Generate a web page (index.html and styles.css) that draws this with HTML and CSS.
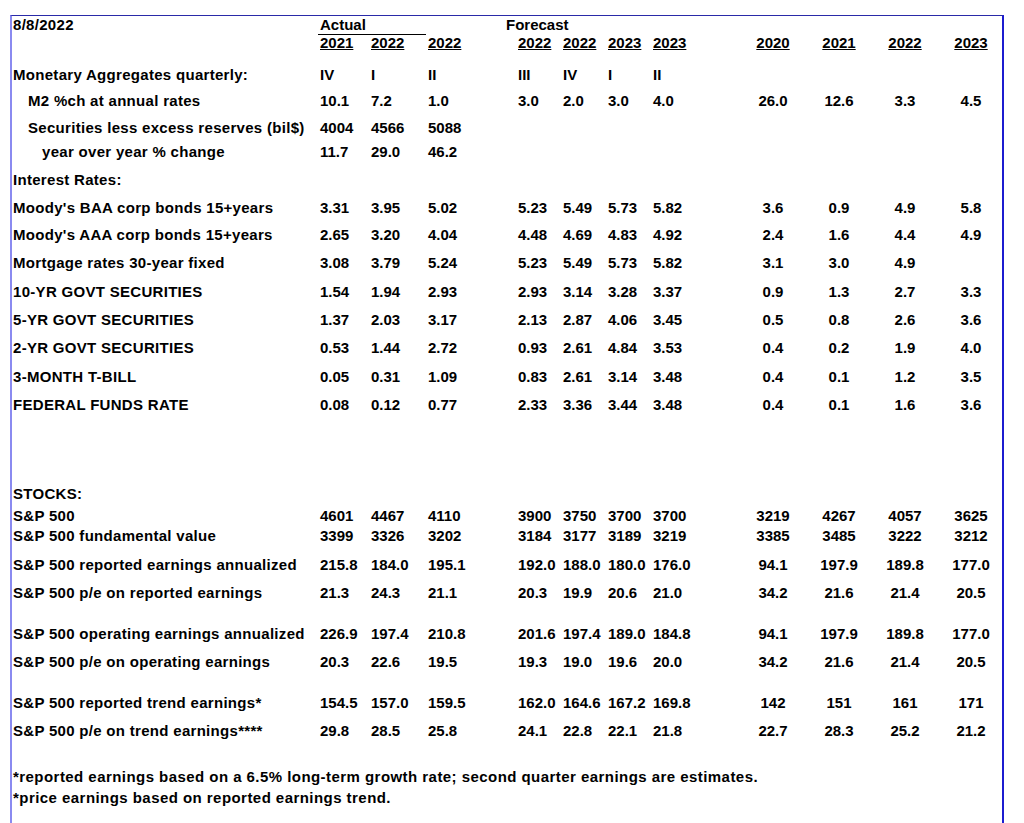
FILE: index.html
```html
<!DOCTYPE html>
<html>
<head>
<meta charset="utf-8">
<title>8/8/2022 forecast</title>
<link rel="stylesheet" href="styles.css">
</head>
<body>
<div class="sheet">
  <div class="row">
    <div>8/8/2022</div>
    <div class="actual">Actual</div>
    <div class="forecast">Forecast</div>
  </div>
  <div class="row">
    <div></div>
    <div class="u">2021</div><div class="u">2022</div><div class="u">2022</div>
    <div class="u">2022</div><div class="u">2022</div><div class="u">2023</div><div class="u">2023</div>
    <div class="c u">2020</div><div class="c u">2021</div><div class="c u">2022</div><div class="c u">2023</div>
  </div>
  <div class="row m14">
    <div>Monetary Aggregates quarterly:</div>
    <div>IV</div><div>I</div><div>II</div>
    <div>III</div><div>IV</div><div>I</div><div>II</div>
  </div>
  <div class="row m8">
    <div class="ind1">M2 %ch at annual rates</div>
    <div>10.1</div><div>7.2</div><div>1.0</div>
    <div>3.0</div><div>2.0</div><div>3.0</div><div>4.0</div>
    <div class="c">26.0</div><div class="c">12.6</div><div class="c">3.3</div><div class="c">4.5</div>
  </div>
  <div class="row m9">
    <div class="ind1">Securities less excess reserves (bil$)</div>
    <div>4004</div><div>4566</div><div>5088</div>
  </div>
  <div class="row m6">
    <div class="ind2">year over year % change</div>
    <div>11.7</div><div>29.0</div><div>46.2</div>
  </div>
  <div class="row m10">
    <div>Interest Rates:</div>
  </div>
  <div class="row m10">
    <div>Moody's BAA corp bonds 15+years</div>
    <div>3.31</div><div>3.95</div><div>5.02</div>
    <div>5.23</div><div>5.49</div><div>5.73</div><div>5.82</div>
    <div class="c">3.6</div><div class="c">0.9</div><div class="c">4.9</div><div class="c">5.8</div>
  </div>
  <div class="row m9">
    <div>Moody's AAA corp bonds 15+years</div>
    <div>2.65</div><div>3.20</div><div>4.04</div>
    <div>4.48</div><div>4.69</div><div>4.83</div><div>4.92</div>
    <div class="c">2.4</div><div class="c">1.6</div><div class="c">4.4</div><div class="c">4.9</div>
  </div>
  <div class="row m10">
    <div>Mortgage rates 30-year fixed</div>
    <div>3.08</div><div>3.79</div><div>5.24</div>
    <div>5.23</div><div>5.49</div><div>5.73</div><div>5.82</div>
    <div class="c">3.1</div><div class="c">3.0</div><div class="c">4.9</div><div class="c"></div>
  </div>
  <div class="row m11">
    <div>10-YR GOVT SECURITIES</div>
    <div>1.54</div><div>1.94</div><div>2.93</div>
    <div>2.93</div><div>3.14</div><div>3.28</div><div>3.37</div>
    <div class="c">0.9</div><div class="c">1.3</div><div class="c">2.7</div><div class="c">3.3</div>
  </div>
  <div class="row m10">
    <div>5-YR GOVT SECURITIES</div>
    <div>1.37</div><div>2.03</div><div>3.17</div>
    <div>2.13</div><div>2.87</div><div>4.06</div><div>3.45</div>
    <div class="c">0.5</div><div class="c">0.8</div><div class="c">2.6</div><div class="c">3.6</div>
  </div>
  <div class="row m10">
    <div>2-YR GOVT SECURITIES</div>
    <div>0.53</div><div>1.44</div><div>2.72</div>
    <div>0.93</div><div>2.61</div><div>4.84</div><div>3.53</div>
    <div class="c">0.4</div><div class="c">0.2</div><div class="c">1.9</div><div class="c">4.0</div>
  </div>
  <div class="row m11">
    <div>3-MONTH T-BILL</div>
    <div>0.05</div><div>0.31</div><div>1.09</div>
    <div>0.83</div><div>2.61</div><div>3.14</div><div>3.48</div>
    <div class="c">0.4</div><div class="c">0.1</div><div class="c">1.2</div><div class="c">3.5</div>
  </div>
  <div class="row m10">
    <div>FEDERAL FUNDS RATE</div>
    <div>0.08</div><div>0.12</div><div>0.77</div>
    <div>2.33</div><div>3.36</div><div>3.44</div><div>3.48</div>
    <div class="c">0.4</div><div class="c">0.1</div><div class="c">1.6</div><div class="c">3.6</div>
  </div>
  <div class="row m71">
    <div>STOCKS:</div>
  </div>
  <div class="row m4">
    <div>S&amp;P 500</div>
    <div>4601</div><div>4467</div><div>4110</div>
    <div>3900</div><div>3750</div><div>3700</div><div>3700</div>
    <div class="c">3219</div><div class="c">4267</div><div class="c">4057</div><div class="c">3625</div>
  </div>
  <div class="row m2">
    <div>S&amp;P 500 fundamental value</div>
    <div>3399</div><div>3326</div><div>3202</div>
    <div>3184</div><div>3177</div><div>3189</div><div>3219</div>
    <div class="c">3385</div><div class="c">3485</div><div class="c">3222</div><div class="c">3212</div>
  </div>
  <div class="row m11">
    <div>S&amp;P 500 reported earnings annualized</div>
    <div>215.8</div><div>184.0</div><div>195.1</div>
    <div>192.0</div><div>188.0</div><div>180.0</div><div>176.0</div>
    <div class="c">94.1</div><div class="c">197.9</div><div class="c">189.8</div><div class="c">177.0</div>
  </div>
  <div class="row m10">
    <div>S&amp;P 500 p/e on reported earnings</div>
    <div>21.3</div><div>24.3</div><div>21.1</div>
    <div>20.3</div><div>19.9</div><div>20.6</div><div>21.0</div>
    <div class="c">34.2</div><div class="c">21.6</div><div class="c">21.4</div><div class="c">20.5</div>
  </div>
  <div class="row m23">
    <div>S&amp;P 500 operating earnings annualized</div>
    <div>226.9</div><div>197.4</div><div>210.8</div>
    <div>201.6</div><div>197.4</div><div>189.0</div><div>184.8</div>
    <div class="c">94.1</div><div class="c">197.9</div><div class="c">189.8</div><div class="c">177.0</div>
  </div>
  <div class="row m10">
    <div>S&amp;P 500 p/e on operating earnings</div>
    <div>20.3</div><div>22.6</div><div>19.5</div>
    <div>19.3</div><div>19.0</div><div>19.6</div><div>20.0</div>
    <div class="c">34.2</div><div class="c">21.6</div><div class="c">21.4</div><div class="c">20.5</div>
  </div>
  <div class="row m23">
    <div>S&amp;P 500 reported trend earnings*</div>
    <div>154.5</div><div>157.0</div><div>159.5</div>
    <div>162.0</div><div>164.6</div><div>167.2</div><div>169.8</div>
    <div class="c">142</div><div class="c">151</div><div class="c">161</div><div class="c">171</div>
  </div>
  <div class="row m10">
    <div>S&amp;P 500 p/e on trend earnings****</div>
    <div>29.8</div><div>28.5</div><div>25.8</div>
    <div>24.1</div><div>22.8</div><div>22.1</div><div>21.8</div>
    <div class="c">22.7</div><div class="c">28.3</div><div class="c">25.2</div><div class="c">21.2</div>
  </div>
  <div class="note m28">*reported earnings based on a 6.5% long-term growth rate; second quarter earnings are estimates.</div>
  <div class="note m3">*price earnings based on reported earnings trend.</div>
</div>
</body>
</html>
```
FILE: styles.css
```css
html, body {
  margin: 0;
  padding: 0;
  background: #ffffff;
}
body {
  font-family: "Liberation Sans", Arial, sans-serif;
  font-weight: bold;
  font-size: 15px;
  color: #000000;
}
.sheet {
  margin: 15px 0 0 10px;
  width: 994px;
  min-height: 840px;
  box-sizing: border-box;
  border-top: 1px solid #2a2aa8;
  border-left: 2px solid #8a8af0;
  border-right: 2px solid #1c1cd0;
  padding-left: 1px;
}
.row {
  display: grid;
  grid-template-columns: 307px 51px 57px 90px 45px 45px 45px 87px 66px 66px 66px 66px;
  height: 18px;
  line-height: 18px;
  white-space: nowrap;
}
.row > div { white-space: nowrap; }
.row > div:first-child { letter-spacing: 0.3px; }
.actual {
  grid-column: 2 / span 2;
  border-bottom: 1px solid #000;
  margin-right: 2px;
  margin-left: -2px;
  padding-left: 2px;
}
.forecast {
  grid-column: 4 / span 5;
  padding-left: 78px;
}
.u { text-decoration: underline; }
.c { text-align: center; }
.ind1 { padding-left: 15px; }
.ind2 { padding-left: 29px; }
.note {
  height: 18px;
  line-height: 18px;
  white-space: nowrap;
  letter-spacing: 0.45px;
}
.m2 { margin-top: 2px; }
.m3 { margin-top: 3px; }
.m4 { margin-top: 4px; }
.m6 { margin-top: 6px; }
.m8 { margin-top: 8px; }
.m9 { margin-top: 9px; }
.m10 { margin-top: 10px; }
.m11 { margin-top: 11px; }
.m14 { margin-top: 14px; }
.m23 { margin-top: 23px; }
.m28 { margin-top: 28px; }
.m71 { margin-top: 71px; }
```
